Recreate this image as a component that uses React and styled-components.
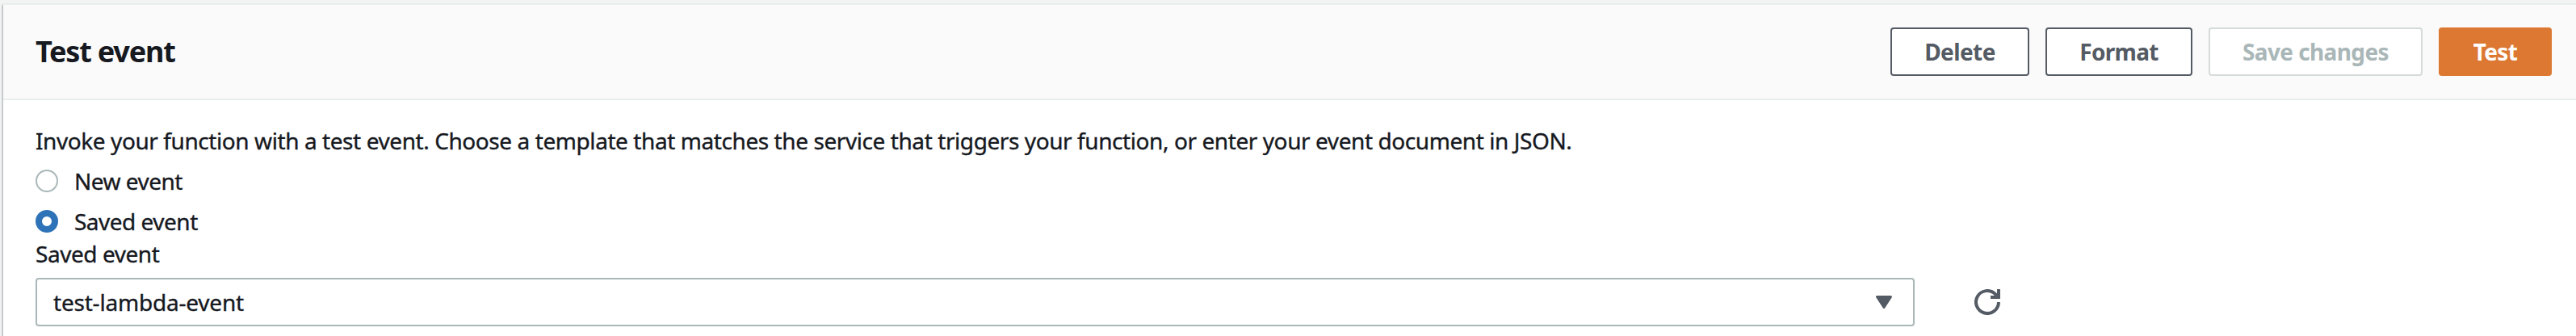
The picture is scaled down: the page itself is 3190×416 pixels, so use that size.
import React from "react";
import styled, { createGlobalStyle } from "styled-components";

const GlobalStyle = createGlobalStyle`
  * { box-sizing: border-box; }
  body { margin: 0; background: #f2f3f3; overflow: hidden; }
`;

const Page = styled.div`
  height: 416px;
  padding: 4px 0 0 4px;
  overflow: hidden;
  color: #16191f;
  font-family: "Noto Sans", "Open Sans", sans-serif;
  font-size: 28px;
  line-height: 40px;
`;

const Panel = styled.section`
  height: 440px;
  background: #fff;
  border-top: 2px solid #eaeded;
  box-shadow: -1px 2px 2px rgba(0, 28, 36, 0.35);
`;

const Header = styled.header`
  display: flex;
  align-items: center;
  justify-content: space-between;
  height: 118px;
  padding: 0 30px 0 40px;
  background: #fafafa;
  border-bottom: 2px solid #eaeded;
`;

const Title = styled.h2`
  margin: 0;
  font-size: 36px;
  line-height: 44px;
  font-weight: 700;
  white-space: nowrap;
  letter-spacing: -1.2px;
`;

const Actions = styled.div`
  display: flex;
  gap: 20px;
`;

const palette = {
  normal: { text: "#545b64", border: "#545b64", fill: "#fff" },
  disabled: { text: "#aab7b8", border: "#d5dbdb", fill: "#fff" },
  primary: { text: "#fff", border: "#dc7832", fill: "#dc7832" },
};

const Button = styled.button`
  display: flex;
  align-items: center;
  justify-content: center;
  width: ${(p) => p.$width}px;
  height: 60px;
  padding: 0;
  border: 2px solid ${(p) => palette[p.$kind].border};
  border-radius: 4px;
  background: ${(p) => palette[p.$kind].fill};
  color: ${(p) => palette[p.$kind].text};
  font: inherit;
  font-weight: 700;
  white-space: nowrap;
  letter-spacing: ${(p) => p.$tracking}px;
`;

const Body = styled.div`
  padding: 30px 40px 0;
  -webkit-text-stroke: 0.35px currentColor;
`;

const Description = styled.p`
  margin: 0 0 10px;
  white-space: nowrap;
  letter-spacing: -0.42px;
`;

const RadioGroup = styled.div`
  display: flex;
  flex-direction: column;
  gap: 10px;
`;

const RadioRow = styled.label`
  display: flex;
  align-items: center;
  gap: 20px;
  letter-spacing: -0.5px;
`;

const Radio = styled.span`
  width: 28px;
  height: 28px;
  border-radius: 50%;
  border: ${(p) => (p.$checked ? "8px solid #2e73b8" : "2px solid #aab7b8")};
  background: #fff;
`;

const FieldLabel = styled.div`
  margin-bottom: 10px;
  letter-spacing: -0.45px;
`;

const FieldRow = styled.div`
  display: flex;
  align-items: center;
  gap: 74px;
`;

const Select = styled.div`
  display: flex;
  align-items: center;
  justify-content: space-between;
  width: 2327px;
  height: 60px;
  padding: 0 26px 0 20px;
  border: 2px solid #aab7b8;
  border-radius: 4px;
  letter-spacing: -0.2px;
`;

const Icon = styled.svg`
  display: block;
  flex: none;
`;

export default function App() {
  return (
    <>
      <GlobalStyle />
      <Page>
        <Panel>
          <Header>
            <Title>Test event</Title>
            <Actions>
              <Button $kind="normal" $width={172} $tracking={-0.6}>Delete</Button>
              <Button $kind="normal" $width={182} $tracking={-0.7}>Format</Button>
              <Button $kind="disabled" $width={265} $tracking={-0.6} disabled>Save changes</Button>
              <Button $kind="primary" $width={140} $tracking={-0.7}>Test</Button>
            </Actions>
          </Header>
          <Body>
            <Description>
              Invoke your function with a test event. Choose a template that matches the service that triggers your function, or enter your event document in JSON.
            </Description>
            <RadioGroup>
              <RadioRow><Radio />New event</RadioRow>
              <RadioRow><Radio $checked />Saved event</RadioRow>
            </RadioGroup>
            <FieldLabel>Saved event</FieldLabel>
            <FieldRow>
              <Select>
                test-lambda-event
                <Icon width="20" height="16" viewBox="0 0 20 16">
                  <path d="M1.5 1.5h17L10 14.5z" fill="#545b64" stroke="#545b64" strokeWidth="3" strokeLinejoin="round" />
                </Icon>
              </Select>
              <Icon width="32" height="32" viewBox="0 0 32 32" fill="none" stroke="#545b64" strokeWidth="4">
                <path d="M30 16A14 14 0 1 1 25.9 6.1L29 9.5" />
                <path d="M20 10h10V0" />
              </Icon>
            </FieldRow>
          </Body>
        </Panel>
      </Page>
    </>
  );
}
